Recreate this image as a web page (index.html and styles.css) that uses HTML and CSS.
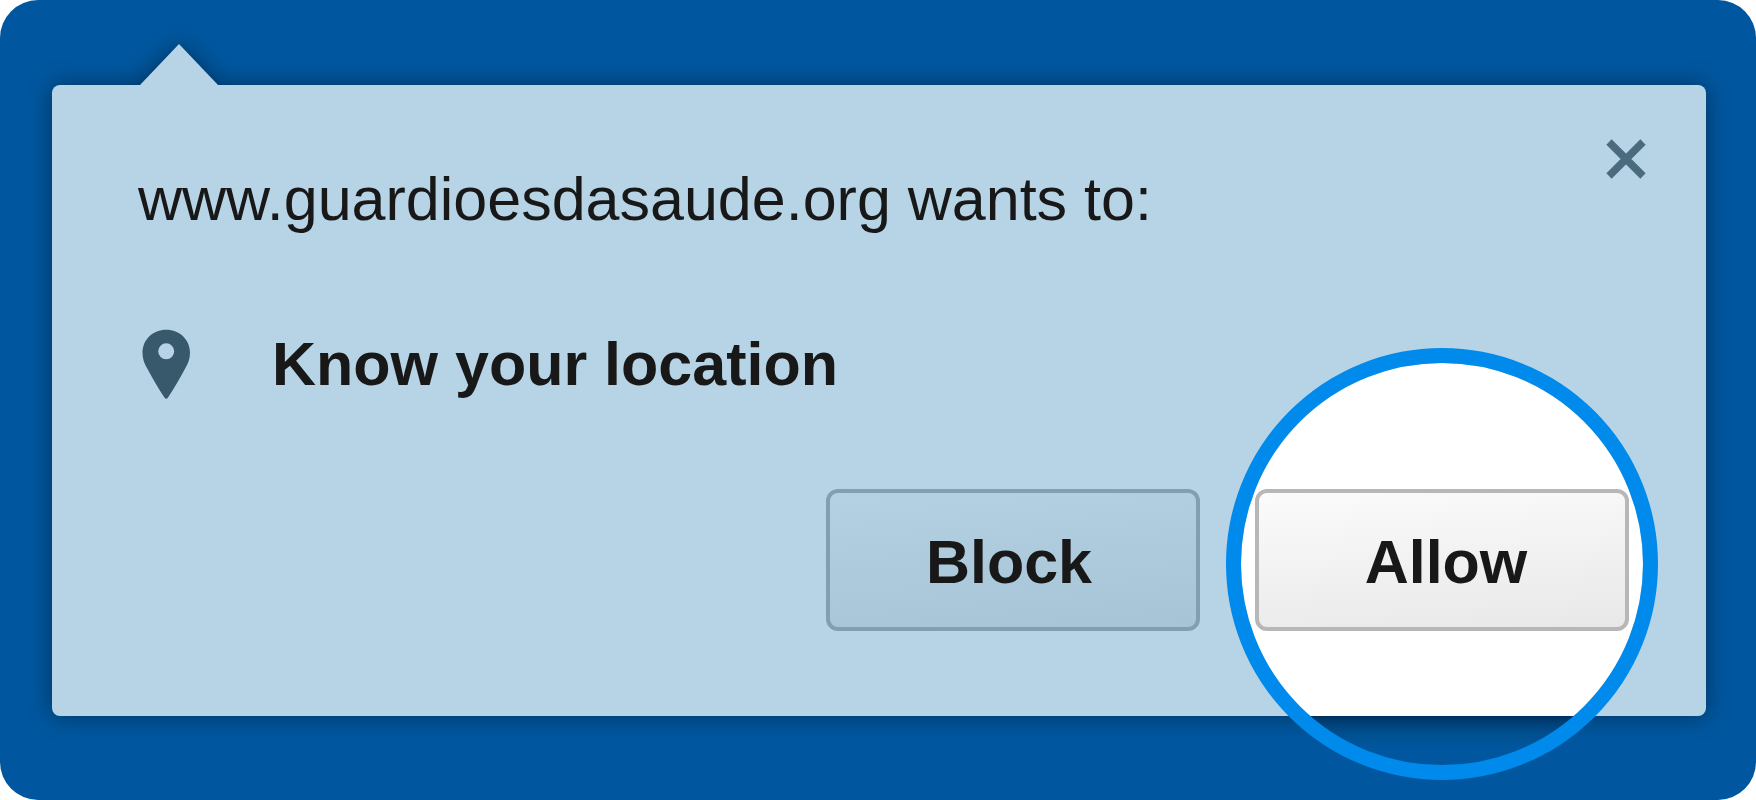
FILE: index.html
```html
<!DOCTYPE html>
<html lang="en">
<head>
<meta charset="utf-8">
<meta name="viewport" content="width=device-width, initial-scale=1">
<title>Location permission</title>
<link rel="stylesheet" href="styles.css">
</head>
<body>
<main class="stage">
  <section class="prompt" role="dialog" aria-labelledby="prompt-title">
    <div class="prompt-shape" aria-hidden="true">
      <svg class="prompt-arrow" viewBox="0 0 78 42"><path d="M0 42V41L39 0L78 41V42Z" fill="currentColor"/></svg>
    </div>
    <header class="prompt-header">
      <h1 class="prompt-title" id="prompt-title">www.guardioesdasaude.org wants to:</h1>
      <button class="close" type="button" aria-label="Close">
        <svg viewBox="0 0 40 40"><path d="M3 3L37 37M37 3L3 37" fill="none" stroke="currentColor" stroke-width="7.5"/></svg>
      </button>
    </header>
    <div class="permission">
      <svg class="pin" viewBox="0 0 48 70" aria-hidden="true"><path fill="currentColor" fill-rule="evenodd" d="M24.200 .7C37.500 .7 48 10.500 48 23.700C48 29.500 46.200 34 43.700 38.500C38.200 49 32 59.500 26 68.500Q24.200 71 22.400 68.500C16.400 59.500 10.200 49 4.700 38.500C2.200 34 .5 29.500 .5 23.700C.5 10.500 11 .7 24.200 .7ZM24.200 14.300A8 8 0 1 0 24.200 30.300A8 8 0 1 0 24.200 14.300Z"/></svg>
      <p class="permission-name">Know your location</p>
    </div>
    <div class="actions">
      <button class="action action-block" type="button">Block</button>
      <div class="spotlight">
        <button class="action action-allow" type="button">Allow</button>
      </div>
    </div>
  </section>
</main>
</body>
</html>
```
FILE: styles.css
```css
*,
*::before {
  box-sizing: border-box;
}

body {
  margin: 0;
  background: #fff;
  color: #181818;
  font-family: "Liberation Sans", Arial, sans-serif;
  font-size: 61px;
  line-height: 70px;
}

.stage {
  display: flex;
  min-height: 100vh;
  padding: 85px 50px 84px 52px;
  border-radius: 38px;
  background: #00579f;
}

.prompt {
  position: relative;
  z-index: 0;
  display: flex;
  flex: 1;
  flex-direction: column;
  padding: 54px 60px 85px 86px;
}

.prompt-shape {
  position: absolute;
  inset: 0;
  z-index: -1;
  border-radius: 8px;
  background: #b7d4e6;
  color: #b7d4e6;
  filter: drop-shadow(0 0 12px rgba(0, 0, 0, 0.42));
}

.prompt-arrow {
  position: absolute;
  bottom: calc(100% - 1px);
  left: 88px;
  width: 78px;
  height: 42px;
}

.prompt-header {
  display: flex;
  align-items: flex-start;
  justify-content: space-between;
}

.prompt-title {
  margin: 25px 0 0;
  font-size: inherit;
  font-weight: 400;
}

.close {
  width: 40px;
  height: 40px;
  padding: 0;
  border: 0;
  background: none;
  color: #4a6b7e;
  cursor: pointer;
}

.close svg {
  display: block;
}

.permission {
  display: flex;
  align-items: center;
  gap: 82px;
  margin-top: 95px;
  padding-left: 4px;
}

.pin {
  width: 48px;
  height: 70px;
  color: #37596b;
}

.permission-name {
  margin: 0;
  font-weight: 700;
}

.actions {
  display: flex;
  justify-content: flex-end;
  gap: 55px;
  margin-top: auto;
  padding: 90px 17px 0 0;
}

.action {
  width: 374px;
  height: 142px;
  padding: 4px 0 0;
  border: 4px solid;
  border-radius: 12px;
  color: #181818;
  font: inherit;
  font-weight: 700;
  cursor: pointer;
}

.action-block {
  padding-right: 8px;
  border-color: #809fb2;
  background: linear-gradient(175deg, #b4d1e3, #a7c4d7);
}

.action-allow {
  position: relative;
  padding-left: 8px;
  border-color: #b7b7b7;
  background: linear-gradient(175deg, #fbfbfb, #e8e8e8);
}

.spotlight {
  position: relative;
}

/* Ring round the recommended action; its lower part hangs over the panel's edge. */
.spotlight::before {
  content: "";
  position: absolute;
  top: -141px;
  left: -29px;
  width: 432px;
  height: 432px;
  border: 15px solid #008aeb;
  border-radius: 50%;
  background: linear-gradient(#fff 353px, #003160 353px, #00427a 361px, #00508f 371px, #00579f 386px) padding-box;
}
```
